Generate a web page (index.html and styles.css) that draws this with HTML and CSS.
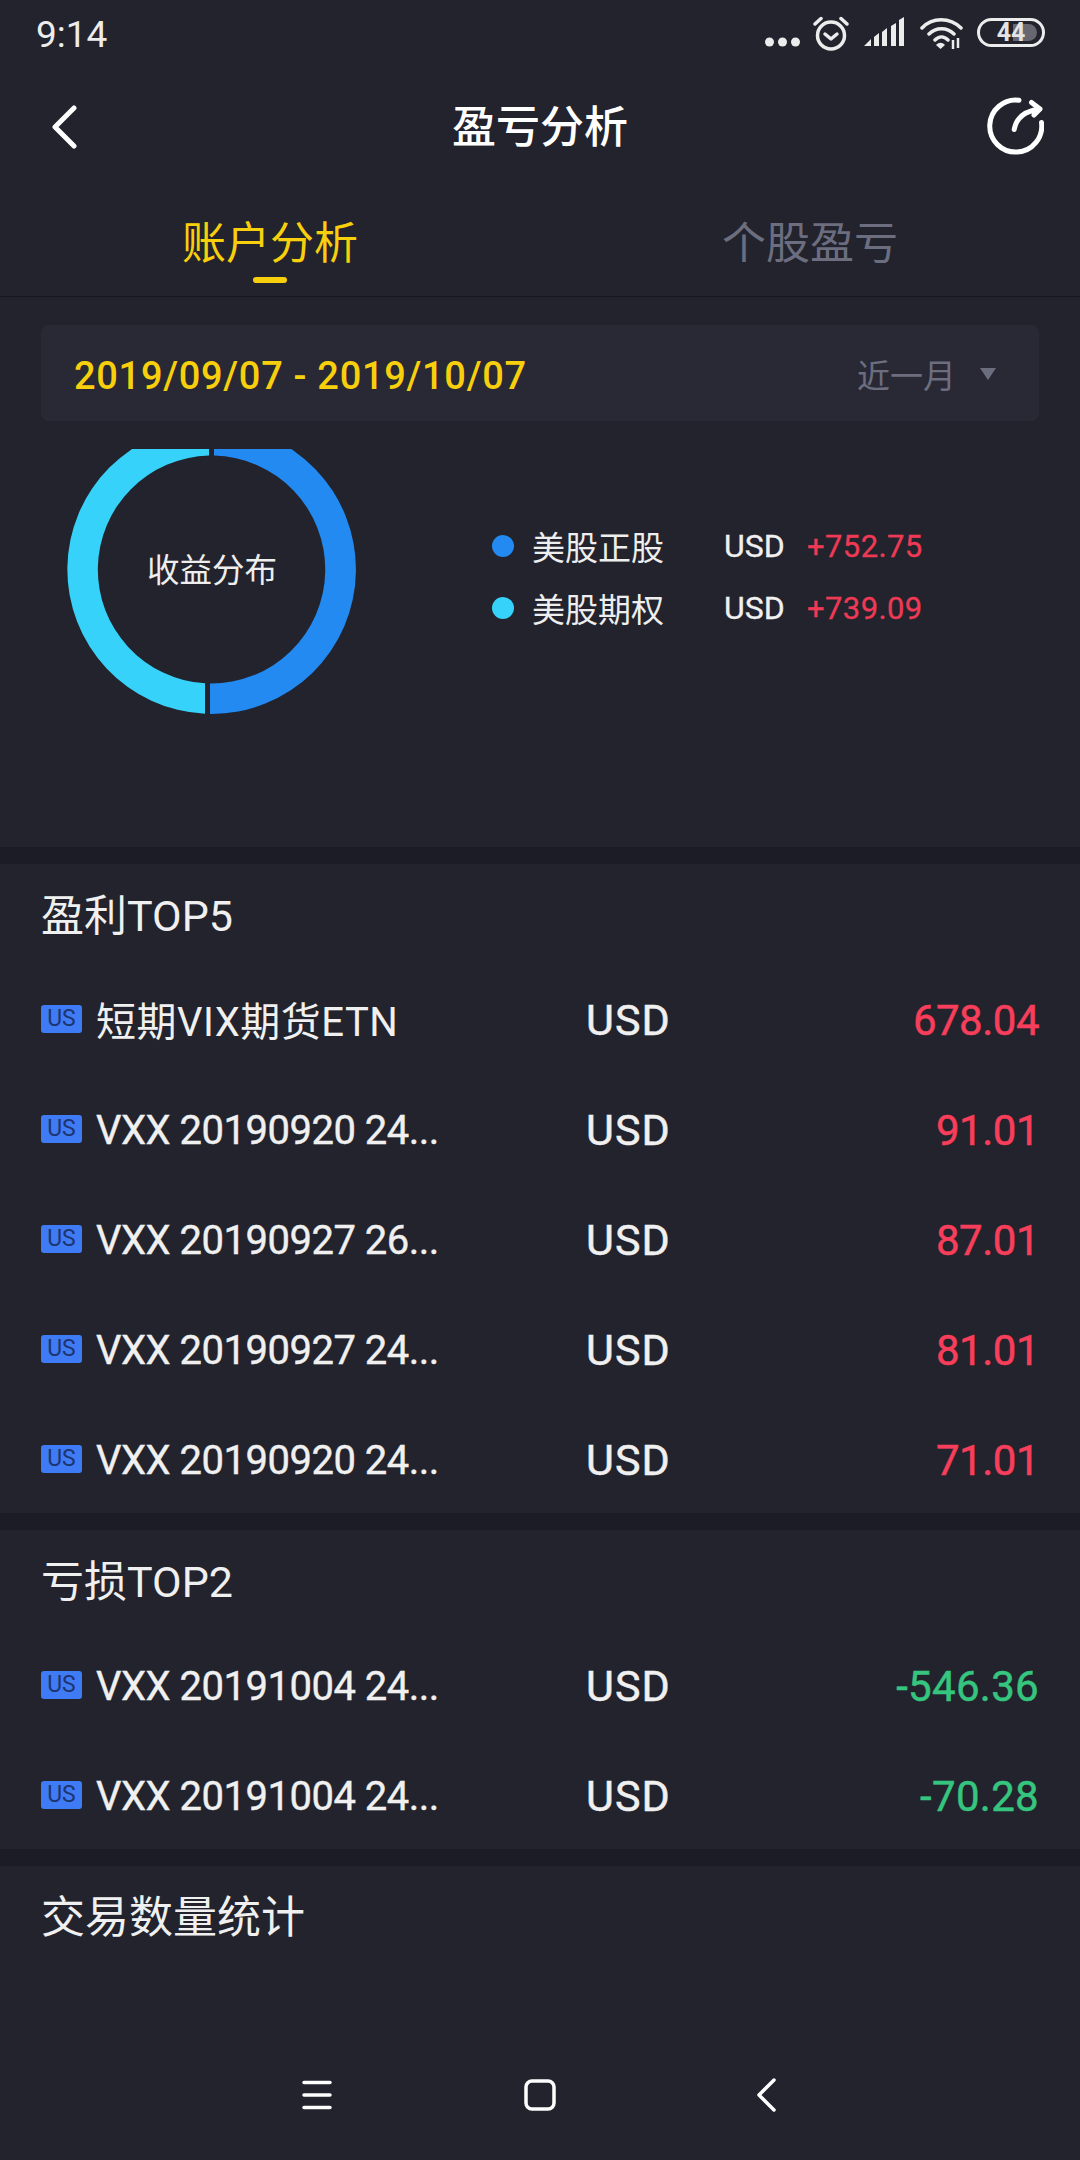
FILE: index.html
```html
<!DOCTYPE html>
<html lang="zh">
<head>
<meta charset="utf-8">
<title>盈亏分析</title>
<link rel="stylesheet" href="styles.css">
</head>
<body>
<div class="page">
  <div class="statusbar">
    <span class="time">9:14</span>
    <div class="status-icons">
      <svg class="ic-dots" width="36" height="10" viewBox="0 0 36 10"><circle cx="4.500" cy="5" r="4.500"/><circle cx="17.500" cy="5" r="4.500"/><circle cx="30.500" cy="5" r="4.500"/></svg>
      <svg class="ic-alarm" width="36" height="36" viewBox="0 0 36 36"><circle cx="18" cy="20.500" r="13.500" class="st"/><path d="M12 19l6 5 6-5" class="st"/><path d="M2 9L8 3.500M34 9L28 3.500" class="st"/></svg>
      <svg class="ic-signal" width="42" height="30" viewBox="0 0 42 30"><path d="M0 29h7V22zM10 29h5V16l-5 4zM18 29h5V11l-5 4zM27 29h5V6l-5 3zM35 29h5V0l-5 3z"/></svg>
      <svg class="ic-wifi" width="44" height="34" viewBox="0 0 44 34"><path d="M2 11C12 0 30 0 41 11M9 17C16 10 27 10 34 17M15 23C19 19 24 19 28 23" class="st"/><path d="M16 28c3-3 6-3 9 0l-4.500 4z"/><path d="M33 23v9M38 21v10" class="st2"/></svg>
      <div class="battery"><span class="battery-fill"></span><span class="battery-num">44</span></div>
    </div>
  </div>

  <div class="navbar">
    <svg class="nav-back" width="28" height="44" viewBox="0 0 28 44"><path d="M24 3L5 22l19 19"/></svg>
    <span class="nav-title">盈亏分析</span>
    <svg class="nav-share" width="58" height="58" viewBox="0 0 58 58"><path d="M55.500 25.500A26 26 0 1 1 33 3.300"/><path d="M28.200 32.500C30 22 38 14 54 12M45.500 5.500L54 12l-6 6"/></svg>
  </div>

  <div class="tabs">
    <div class="tab tab-on">账户分析<span class="tab-bar"></span></div>
    <div class="tab">个股盈亏</div>
  </div>

  <div class="range-wrap">
    <div class="range">
      <span class="range-date">2019/09/07 - 2019/10/07</span>
      <span class="range-pick">近一月<span class="tri"></span></span>
    </div>
  </div>

  <div class="dist">
    <div class="donut">
      <svg width="290" height="266" viewBox="0 0 290 266" class="donut-svg">
        <path class="seg-a" d="M147 -23.980A144.500 144.500 0 0 1 143 264.990V234.490A114 114 0 0 0 147 6.530Z"/>
        <path class="seg-b" d="M142 -23.980A144.500 144.500 0 0 0 138 264.830V234.290A114 114 0 0 1 142 6.530Z"/>
      </svg>
      <span class="donut-label">收益分布</span>
    </div>
    <div class="legend">
      <div class="legend-row"><i class="dot dot-a"></i><span class="legend-name">美股正股</span><span class="legend-cur">USD</span><span class="legend-val">+752.75</span></div>
      <div class="legend-row"><i class="dot dot-b"></i><span class="legend-name">美股期权</span><span class="legend-cur">USD</span><span class="legend-val">+739.09</span></div>
    </div>
  </div>

  <div class="sep"></div>
  <section class="sect sect-top5">
    <h2 class="sect-title">盈利TOP5</h2>
    <div class="row"><span class="badge">US</span><span class="name name-cjk">短期VIX期货ETN</span><span class="cur">USD</span><span class="val up">678.04</span></div>
    <div class="row"><span class="badge">US</span><span class="name">VXX 20190920 24...</span><span class="cur">USD</span><span class="val up">91.01</span></div>
    <div class="row"><span class="badge">US</span><span class="name">VXX 20190927 26...</span><span class="cur">USD</span><span class="val up">87.01</span></div>
    <div class="row"><span class="badge">US</span><span class="name">VXX 20190927 24...</span><span class="cur">USD</span><span class="val up">81.01</span></div>
    <div class="row"><span class="badge">US</span><span class="name">VXX 20190920 24...</span><span class="cur">USD</span><span class="val up">71.01</span></div>
  </section>
  <div class="sep"></div>
  <section class="sect sect-top2">
    <h2 class="sect-title">亏损TOP2</h2>
    <div class="row"><span class="badge">US</span><span class="name">VXX 20191004 24...</span><span class="cur">USD</span><span class="val down">-546.36</span></div>
    <div class="row"><span class="badge">US</span><span class="name">VXX 20191004 24...</span><span class="cur">USD</span><span class="val down">-70.28</span></div>
  </section>
  <div class="sep"></div>
  <section class="sect sect-last">
    <h2 class="sect-title">交易数量统计</h2>
  </section>

  <div class="sysnav">
    <svg width="32" height="30" viewBox="0 0 32 30"><path d="M3 2.500h26M3 15h26M3 27.500h26"/></svg>
    <svg width="32" height="32" viewBox="0 0 32 32"><rect x="2" y="2" width="28" height="28" rx="6"/></svg>
    <svg class="sys-back" width="20" height="34" viewBox="0 0 20 34"><path d="M17 2L2 17l15 15"/></svg>
  </div>
</div>
</body>
</html>
```
FILE: styles.css
```css
* { box-sizing: border-box; }
html, body { margin: 0; padding: 0; }
body { background: #22232d; font-family: Roboto, "Noto Sans CJK SC", sans-serif; color: #f0f0f0; }
.page { width: 1080px; height: 2160px; overflow: hidden; background: #22232d; }

.statusbar { height: 68px; display: flex; align-items: center; justify-content: space-between; padding: 0 35px 0 36px; }
.time { font-size: 37px; color: #ececec; }
.status-icons { display: flex; align-items: center; }
.status-icons svg { fill: #ececec; flex: none; }
.st { fill: none; stroke: #ececec; stroke-width: 3.500; stroke-linecap: round; stroke-linejoin: round; }
.st2 { fill: none; stroke: #ececec; stroke-width: 2.500; }
.ic-dots { margin: 16px 12px 0 0; }
.ic-alarm { margin: -2px 15px 0 0; }
.ic-signal { margin: -4px 14px 0 0; }
.ic-wifi { margin: 0 13px 0 0; }
.battery { width: 68px; height: 29px; border: 3px solid #ececec; border-radius: 15px; position: relative; display: flex; align-items: center; justify-content: center; margin-top: -3px; }
.battery-fill { position: absolute; left: 33px; right: 5px; top: 3px; bottom: 3px; background: #666770; border-radius: 0 9px 9px 0; }
.battery-num { position: relative; font-size: 25px; font-weight: 700; color: #e4e4e4; line-height: 23px; }

.navbar { height: 118px; display: flex; align-items: center; justify-content: space-between; padding: 0 36px 0 50px; position: relative; }
.nav-back path { fill: none; stroke: #fff; stroke-width: 5; stroke-linecap: round; stroke-linejoin: round; }
.nav-share path { fill: none; stroke: #fff; stroke-width: 5; stroke-linecap: round; stroke-linejoin: round; }
.nav-share { margin-top: -2px; }
.nav-title { position: absolute; left: 0; right: 0; top: 30px; text-align: center; font-size: 44px; line-height: 60px; font-weight: 500; color: #fff; }

.tabs { height: 111px; display: flex; border-bottom: 1px solid #16171e; }
.tab { width: 50%; font-size: 44px; color: #6c6e80; text-align: center; padding-top: 30px; position: relative; line-height: 56px; }
.tab-on { color: #f7cf0d; }
.tab-bar { position: absolute; left: 253px; width: 34px; height: 6px; top: 91px; background: #f7cf0d; border-radius: 3px; }

.range-wrap { padding: 28px 41px 0; }
.range { height: 96px; background: #282934; border-radius: 8px; display: flex; align-items: center; justify-content: space-between; padding: 6px 43px 0 33px; }
.range-date { font-size: 38px; font-weight: 500; color: #f7cf0d; letter-spacing: 0.700px; }
.range-pick { font-size: 33px; color: #6c6e80; display: flex; align-items: center; margin-top: -4px; }
.tri { width: 0; height: 0; border-left: 8px solid transparent; border-right: 8px solid transparent; border-top: 12px solid #6c6e80; margin-left: 24px; }

.dist { height: 426px; padding: 28px 0 0 67px; display: flex; }
.donut { width: 290px; height: 266px; position: relative; flex: none; }
.donut-svg { display: block; }
.seg-a { fill: #238af1; }
.seg-b { fill: #37d2f9; }
.donut-label { position: absolute; left: 0; width: 290px; top: 102px; text-align: center; font-size: 32.500px; line-height: 40px; color: #eee; }
.legend { margin: 76px 0 0 135px; display: flex; flex-direction: column; gap: 20px; }
.legend-row { display: flex; align-items: center; height: 42px; }
.dot { width: 22px; height: 22px; border-radius: 50%; margin-right: 18px; flex: none; }
.dot-a { background: #238af1; }
.dot-b { background: #37d2f9; }
.legend-name { width: 192px; font-size: 33px; color: #eee; flex: none; }
.legend-cur { width: 83px; font-size: 32px; color: #f0f0f0; flex: none; -webkit-text-stroke: 0.300px #f0f0f0; }
.legend-val { font-size: 31px; letter-spacing: 0.400px; color: #ee3a55; -webkit-text-stroke: 0.300px #ee3a55; }

.sep { height: 17px; background: #1b1c26; }
.sect-title { margin: 0; padding: 0 41px; font-size: 43px; font-weight: 400; line-height: 105px; height: 86px; color: #f0f0f0; }
.sect-last .sect-title { font-size: 44px; }
.sect-top5 { height: 649px; }
.sect-top2 { height: 319px; }
.sect-last { height: 212px; }
.row { height: 110px; display: flex; align-items: center; padding: 0 41px; position: relative; top: 15px; }
.badge { width: 41px; height: 28px; background: #3f7bf5; border-radius: 3px; color: #1d3570; font-size: 23px; line-height: 28px; text-align: center; margin: -3px 14px 0 0; flex: none; }
.name { width: 490px; font-size: 40px; color: #f0f0f0; letter-spacing: -0.500px; flex: none; -webkit-text-stroke: 0.400px #f0f0f0; }
.name-cjk { letter-spacing: 0.500px; margin-top: -3px; -webkit-text-stroke: 0; }
.cur { font-size: 43px; color: #f0f0f0; letter-spacing: 1px; -webkit-text-stroke: 0.500px #f0f0f0; }
.val { flex: 1; text-align: right; font-size: 42px; letter-spacing: -0.500px; }
.up { color: #f73e5a; -webkit-text-stroke: 0.500px #f73e5a; }
.down { color: #36c57f; letter-spacing: 0.300px; -webkit-text-stroke: 0.500px #36c57f; }

.sysnav { display: flex; align-items: center; gap: 191px; padding-left: 301px; }
.sysnav svg { fill: none; stroke: #fff; stroke-width: 3.500; stroke-linecap: round; stroke-linejoin: round; flex: none; }
.sysnav .sys-back { margin-left: 10px; }
```
